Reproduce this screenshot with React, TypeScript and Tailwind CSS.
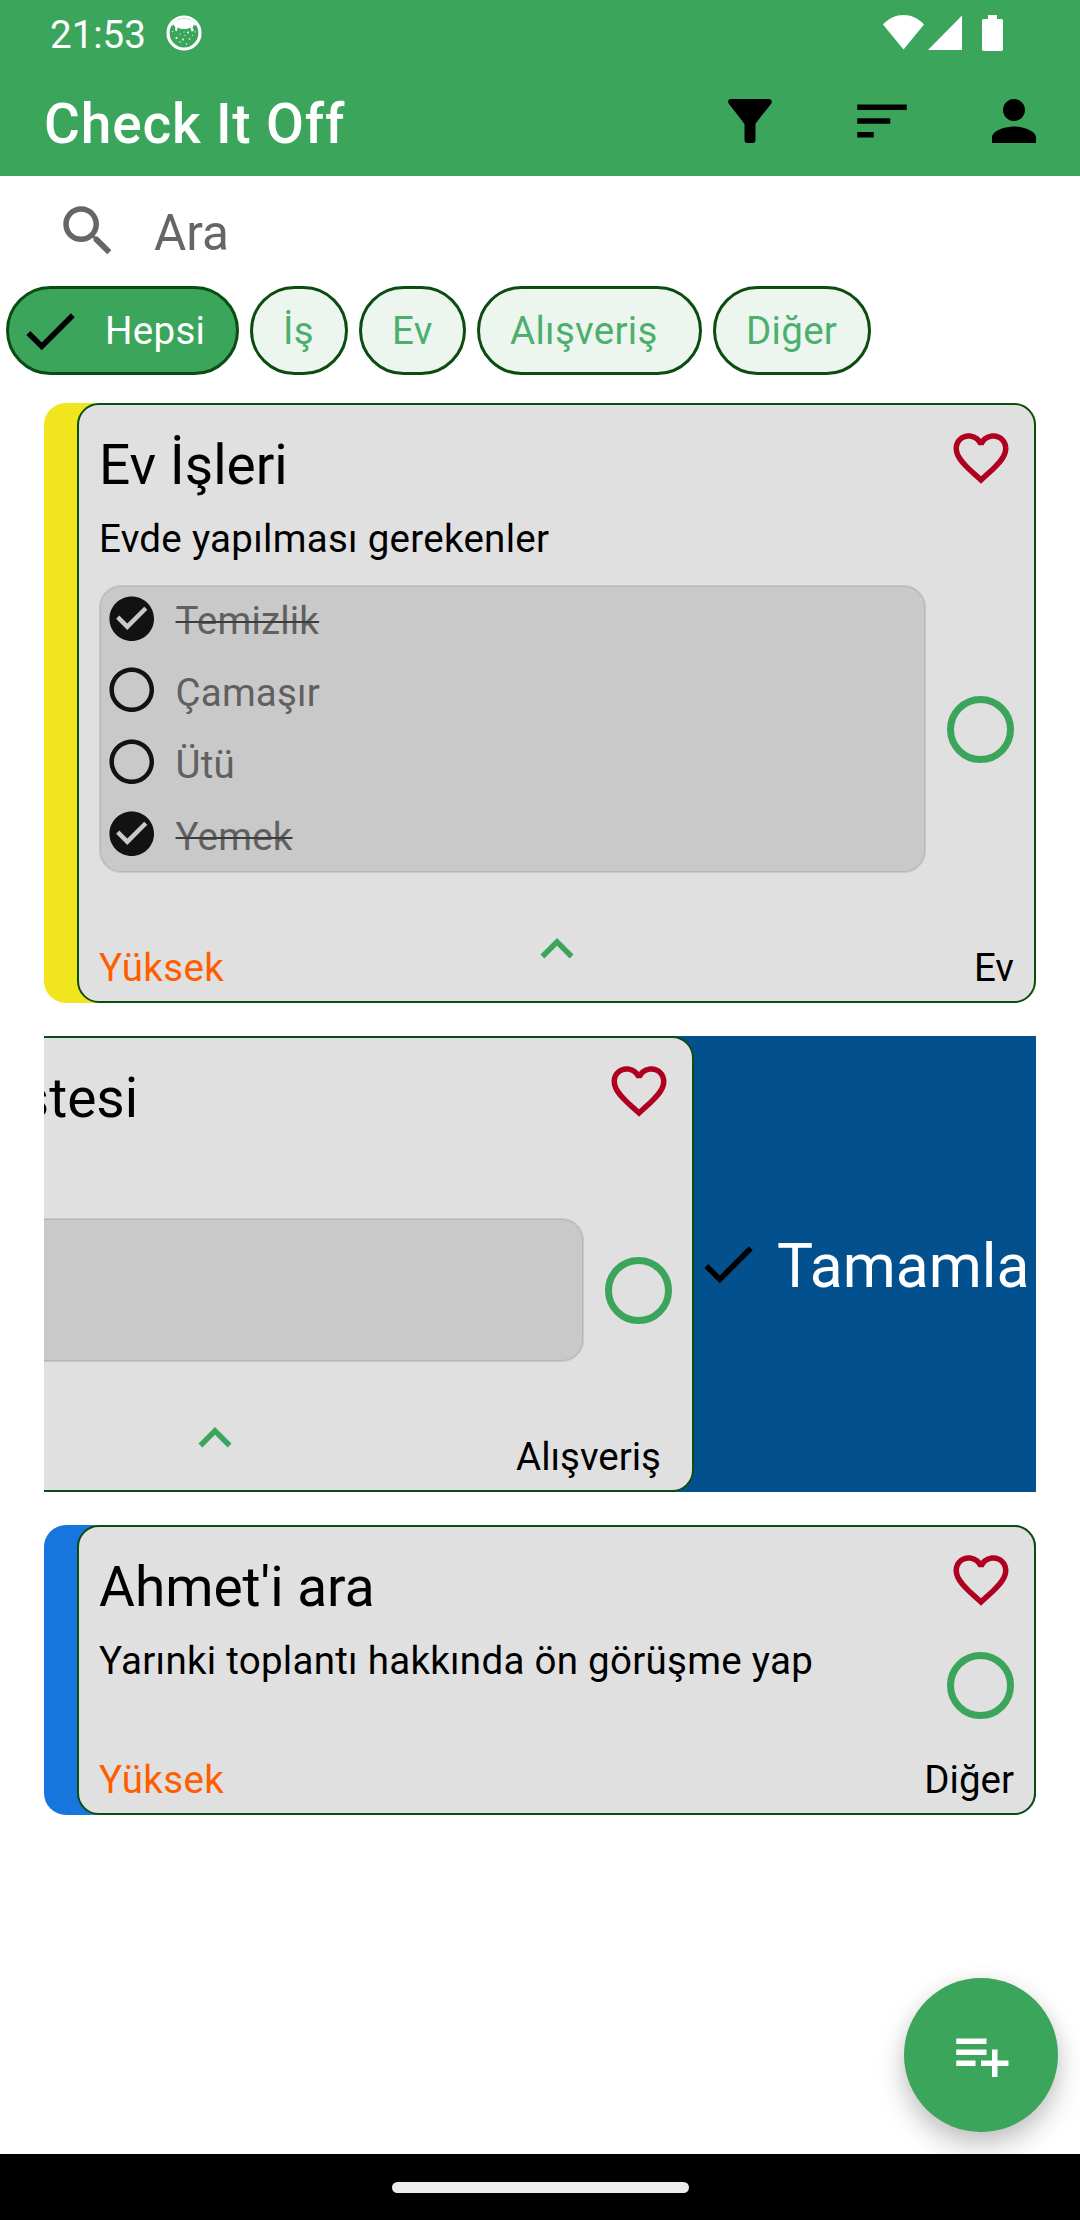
import React from "react";

type IconProps = { d: string; className?: string };

function Icon({ d, className = "size-[66px]" }: IconProps) {
  return (
    <svg viewBox="0 0 24 24" fill="currentColor" className={`shrink-0 ${className}`}>
      <path d={d} />
    </svg>
  );
}

const FILTER =
  "M4.25 5.61C6.27 8.2 10 13 10 13v6c0 .55.45 1 1 1h2c.55 0 1-.45 1-1v-6s3.72-4.8 5.74-7.39A.998.998 0 0 0 18.95 4H5.04c-.83 0-1.3.95-.79 1.61z";
const SORT = "M3 18h6v-2H3v2zM3 6v2h18V6H3zm0 7h12v-2H3v2z";
const PERSON =
  "M12 12c2.21 0 4-1.79 4-4s-1.79-4-4-4-4 1.79-4 4 1.79 4 4 4zm0 2c-2.67 0-8 1.34-8 4v2h16v-2c0-2.66-5.33-4-8-4z";
const SEARCH =
  "M15.5 14h-.79l-.28-.27C15.41 12.59 16 11.11 16 9.5 16 5.91 13.09 3 9.5 3S3 5.91 3 9.5 5.91 16 9.5 16c1.61 0 3.09-.59 4.23-1.57l.27.28v.79l5 4.99L20.49 19l-4.99-5zm-6 0C7.01 14 5 11.99 5 9.5S7.01 5 9.5 5 14 7.01 14 9.5 11.99 14 9.5 14z";
const CHECK = "M9 16.17L4.83 12l-1.42 1.41L9 19 21 7l-1.41-1.41L9 16.17z";
const HEART =
  "M16.5 3c-1.74 0-3.41.81-4.5 2.09C10.91 3.81 9.24 3 7.5 3 4.42 3 2 5.42 2 8.5c0 3.78 3.4 6.86 8.55 11.54L12 21.35l1.45-1.32C18.6 15.36 22 12.28 22 8.5 22 5.42 19.58 3 16.5 3zm-4.4 15.55l-.1.1-.1-.1C7.14 14.24 4 11.39 4 8.5 4 6.5 5.5 5 7.5 5c1.54 0 3.04.99 3.57 2.36h1.87C13.46 5.99 14.96 5 16.5 5c2 0 3.5 1.5 3.5 3.5 0 2.89-3.14 5.74-7.9 10.05z";
const CHECK_CIRCLE =
  "M12 2C6.48 2 2 6.48 2 12s4.48 10 10 10 10-4.48 10-10S17.52 2 12 2zm-2 15l-5-5 1.41-1.41L10 14.17l7.59-7.59L19 8l-9 9z";
const CIRCLE =
  "M12 2C6.48 2 2 6.48 2 12s4.48 10 10 10 10-4.48 10-10S17.52 2 12 2zm0 18c-4.42 0-8-3.58-8-8s3.58-8 8-8 8 3.58 8 8-3.58 8-8 8z";
const CHEVRON_UP = "M12 8l-6 6 1.41 1.41L12 10.83l4.59 4.58L18 14z";
const PLAYLIST_ADD =
  "M14 10H3v2h11v-2zm0-4H3v2h11V6zm4 8v-4h-2v4h-4v2h4v4h2v-4h4v-2h-4zM3 16h7v-2H3v2z";

function StatusBar() {
  return (
    <div className="flex h-[66px] items-start pl-[50px] pr-[77px] text-white">
      <span className="mt-[13px] w-[96px] text-[38.5px] leading-[44px]">21:53</span>
      <svg viewBox="0 0 36 36" className="ml-[20px] mt-[15px] size-[36px]">
        <circle cx="18" cy="18" r="16" fill="none" stroke="white" strokeWidth="3.2" />
        <path
          d="M6 10C10 1.500 26 1.500 30 10L29.3 11 27.8 9.6 26.6 13 28 15.3 25.8 16.8 24.2 12.6C21 14.6 15 14.6 11.8 12.6L10.6 16.5 9 15 9.4 13 7.8 9.6 6.5 11Z"
          fill="white"
        />
        <g fill="white">
          <circle cx="10.5" cy="23" r="1.1" />
          <circle cx="22" cy="17.6" r="1" />
          <circle cx="17" cy="24.5" r=".9" />
          <circle cx="23.5" cy="24" r=".8" />
          <circle cx="14" cy="19" r=".6" />
          <circle cx="19" cy="20.5" r=".6" />
          <circle cx="26.5" cy="20.5" r=".6" />
          <circle cx="14" cy="27" r=".7" />
          <circle cx="20.5" cy="29" r=".8" />
          <circle cx="6.8" cy="16.5" r=".6" />
          <circle cx="29" cy="16.8" r=".6" />
          <circle cx="18" cy="17" r=".5" />
        </g>
      </svg>
      <div className="ml-auto mt-[15px] flex">
        <svg viewBox="0 0 41 36" className="h-[36px] w-[41px]" fill="white">
          <path d="M0 9.6C11-3.2 30-3.2 41 9.6L20.5 34.6Z" />
        </svg>
        <svg viewBox="0 0 34 36" className="ml-[4px] h-[36px] w-[34px]" fill="white">
          <path d="M34 .5V35H0Z" />
        </svg>
        <svg viewBox="0 0 21 36" className="ml-[20px] h-[36px] w-[21px]" fill="white">
          <path d="M6 0h9v4h4.5Q21 4 21 5.500V34.300Q21 36 19.500 36H1.500Q0 36 0 34.300V5.500Q0 4 1.500 4H6Z" />
        </svg>
      </div>
    </div>
  );
}

function AppBar() {
  return (
    <div className="flex h-[110px] items-center pl-11 pr-[33px]">
      <h1 className="mt-[6px] text-[55px] font-medium leading-[64px] tracking-[0.83px] text-white">
        Check It Off
      </h1>
      <div className="ml-auto flex gap-[66px] text-black">
        <Icon d={FILTER} />
        <Icon d={SORT} />
        <Icon d={PERSON} />
      </div>
    </div>
  );
}

function SearchField() {
  return (
    <div className="flex h-[110px] items-center pl-[55px] text-[#666666]">
      <Icon d={SEARCH} />
      <span className="ml-[33px] mt-[4px] text-[49.5px] leading-[60px]">Ara</span>
    </div>
  );
}

const chips = [
  { label: "İş", width: "w-[98px]" },
  { label: "Ev", width: "w-[107px]" },
  { label: "Alışveriş", width: "w-[225px]" },
  { label: "Diğer", width: "w-[158px]" },
];

function Chips() {
  return (
    <div className="flex gap-[11px] pl-[6px] text-[38.5px] leading-[44px] tracking-[0.3px]">
      <div className="flex h-[89px] w-[233px] items-center rounded-full border-[3px] border-[#0b4d10] bg-[#3aa55b] pl-[8px]">
        <Icon d={CHECK} className="size-[66px] text-black" />
        <span className="ml-[22px] text-white">Hepsi</span>
      </div>
      {chips.map((c) => (
        <div
          key={c.label}
          className={`flex h-[89px] items-center rounded-full border-[3px] border-[#0b4d10] bg-[#ecf6ef] pl-[30px] text-[#4caf6d] ${c.width}`}
        >
          {c.label}
        </div>
      ))}
    </div>
  );
}

type Item = { text: string; done: boolean };

function Checklist({ items }: { items: Item[] }) {
  return (
    <div className="flex w-[827px] flex-col gap-[6px] rounded-[22px] border border-[#c9c9c9] bg-[#c9c9c9] pb-[5px] pl-[5px] shadow-[inset_0_0_0_1px_#b6b6b6]">
      {items.map((it, i) => (
        <div key={i} className="flex h-[66px] items-center first:h-[65px]">
          {it.text && (
            <>
              <Icon
                d={it.done ? CHECK_CIRCLE : CIRCLE}
                className="size-[53.5px] text-[#121212]"
              />
              <span
                className={`ml-[17px] mt-[5px] text-[38.5px] leading-[44px] tracking-[0.2px] text-[#606060] ${
                  it.done ? "line-through decoration-[#3c3c3c] decoration-2" : ""
                }`}
              >
                {it.text}
              </span>
            </>
          )}
        </div>
      ))}
    </div>
  );
}

type CardProps = {
  bar: string;
  size: string;
  title: string;
  subtitle: string;
  items?: Item[];
  priority: string;
  category: string;
  categoryPad?: string;
};

function TodoCard({ bar, size, title, subtitle, items, priority, category, categoryPad = "" }: CardProps) {
  const ring = <div className="size-[67px] shrink-0 rounded-full border-[7px] border-[#3aa55b]" />;
  return (
    <div className={`flex w-[992px] shrink-0 rounded-[22px] pl-[33px] ${bar} ${size}`}>
      <div className="flex flex-1 flex-col rounded-[22px] border-2 border-[#0b4d10] bg-[#e0e0e0] px-5 pb-[11px] pt-[28px] text-black">
        <div className="flex h-16 items-start justify-between">
          <h2 className="text-[55px] leading-[64px]">{title}</h2>
          <Icon d={HEART} className="-mt-[8px] size-[66px] text-[#b00020]" />
        </div>
        <div className="flex justify-between">
          <p className="mt-5 h-11 text-[38.5px] leading-[44px] tracking-[0.28px]">{subtitle}</p>
          {!items && <div className="mt-[33px] h-[67px]">{ring}</div>}
        </div>
        {items && (
          <div className="mt-6 flex items-center justify-between">
            <Checklist items={items} />
            {ring}
          </div>
        )}
        <div className="mt-auto grid grid-cols-3 items-end text-[38.5px] leading-[44px]">
          <span className="tracking-[0.35px] text-[#ff5e00]">{priority}</span>
          <span className="justify-self-center">
            {items && <Icon d={CHEVRON_UP} className="mb-2 size-[66px] text-[#3aa55b]" />}
          </span>
          <span className={`justify-self-end ${categoryPad}`}>{category}</span>
        </div>
      </div>
    </div>
  );
}

export default function App() {
  return (
    <div className="flex h-[2220px] w-[1080px] flex-col overflow-hidden bg-white font-['Roboto',sans-serif]">
      <header className="bg-[#3aa55b]">
        <StatusBar />
        <AppBar />
      </header>
      <SearchField />
      <Chips />

      <main className="mt-7 flex flex-1 flex-col gap-[33px] px-11">
        <TodoCard
          bar="bg-[#f1e61d]"
          size="h-[600px]"
          title="Ev İşleri"
          subtitle="Evde yapılması gerekenler"
          items={[
            { text: "Temizlik", done: true },
            { text: "Çamaşır", done: false },
            { text: "Ütü", done: false },
            { text: "Yemek", done: true },
          ]}
          priority="Yüksek"
          category="Ev"
        />

        <div className="flex h-[456px] overflow-hidden bg-[#02518e]">
          <div className="-ml-[342px] shrink-0">
            <TodoCard
              bar=""
              size="h-[456px]"
              title="Alışveriş Listesi"
              subtitle=""
              items={[
                { text: "", done: false },
                { text: "", done: false },
              ]}
              priority=""
              category="Alışveriş"
              categoryPad="pr-[11px]"
            />
          </div>
          <div className="flex items-center pl-[1px]">
            <Icon d={CHECK} className="size-[66px] text-black" />
            <span className="ml-[16px] mt-[5px] text-[60.5px] leading-[70px] text-white">Tamamla</span>
          </div>
        </div>

        <TodoCard
          bar="bg-[#1676de]"
          size="h-[290px]"
          title="Ahmet'i ara"
          subtitle="Yarınki toplantı hakkında ön görüşme yap"
          priority="Yüksek"
          category="Diğer"
        />
      </main>

      <button className="mb-[22px] mr-[22px] flex size-[154px] items-center justify-center self-end rounded-full bg-[#3aa55b] text-white shadow-[0_14px_28px_rgba(0,0,0,0.22),0_2px_20px_rgba(0,0,0,0.06)]">
        <Icon d={PLAYLIST_ADD} />
      </button>

      <nav className="z-10 flex h-[66px] shrink-0 items-center justify-center bg-black">
        <div className="h-[11px] w-[297px] rounded-full bg-[#ececec]" />
      </nav>
    </div>
  );
}
